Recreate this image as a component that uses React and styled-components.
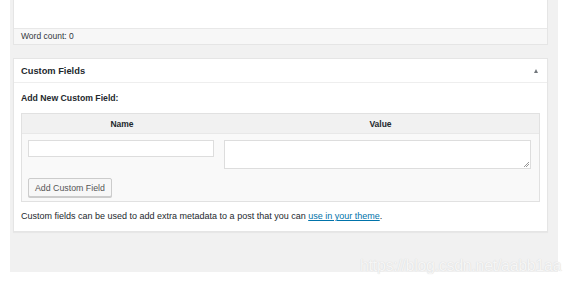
import React from 'react'
import styled, { createGlobalStyle } from 'styled-components'

const GlobalStyle = createGlobalStyle`
    body {
        margin: 0;
        background: #fff;
        font-family: "Liberation Sans", Arial, sans-serif;
        color: #23282d;
    }
`

const Page = styled.div`
    position: relative;
    width: 578px;
    height: 285px;
`

const Wrap = styled.div`
    margin-left: 10px;
    width: 535px;
    height: 272px;
    padding: 0 10px 0 3px;
    background: #f1f1f1;
    display: flex;
    flex-direction: column;
    gap: 13px;
`

const Editor = styled.div`
    background: #fff;
    border: 1px solid #e5e5e5;
    border-top: none;
    height: 44px;
    display: flex;
    flex-direction: column;
    justify-content: flex-end;
`

const WordCount = styled.div`
    height: 15px;
    border-top: 1px solid #e8e8e8;
    background: #f7f7f7;
    font-size: 8.5px;
    line-height: 15px;
    padding-left: 7px;
    color: #32373c;
`

const Box = styled.div`
    background: #fff;
    border: 1px solid #e5e5e5;
    box-shadow: 0 1px 1px rgba(0, 0, 0, 0.04);
`

const BoxHeader = styled.div`
    height: 23px;
    border-bottom: 1px solid #eee;
    display: flex;
    align-items: center;
    justify-content: space-between;
    padding: 0 9px 0 7px;

    h2 {
        margin: 0;
        font-size: 9.3px;
        font-weight: bold;
    }
`

const Toggle = styled.span`
    width: 0;
    height: 0;
    border-left: 2.5px solid transparent;
    border-right: 2.5px solid transparent;
    border-bottom: 4px solid #72777c;
`

const BoxBody = styled.div`
    padding: 10px 7px 0;

    p {
        margin: 0;
        font-size: 9px;
    }
`

const Subtitle = styled.p`
    && {
        font-weight: bold;
        font-size: 8.7px;
        margin-bottom: 10px;
    }
`

const Table = styled.div`
    border: 1px solid #e1e1e1;
    background: #f9f9f9;
    display: grid;
    grid-template-columns: 200px 1fr;
`

const HeadCell = styled.div`
    height: 19px;
    background: #f1f1f1;
    border-bottom: 1px solid #e8e8e8;
    font-size: 8.5px;
    font-weight: bold;
    display: flex;
    align-items: center;
    justify-content: center;
`

const Cell = styled.div`
    padding: ${p => p.$pad || '6px 7px'};
`

const Input = styled.div`
    height: 15px;
    background: #fff;
    border: 1px solid #ddd;
`

const TextArea = styled.div`
    position: relative;
    height: 27px;
    background: #fff;
    border: 1px solid #ddd;

    &::after {
        content: '';
        position: absolute;
        right: 1px;
        bottom: 1px;
        width: 5px;
        height: 5px;
        background: linear-gradient(135deg, transparent 45%, #999 45%, #999 55%, transparent 55%, transparent 70%, #999 70%, #999 80%, transparent 80%);
    }
`

const ButtonRow = styled.div`
    grid-column: 1 / 3;
    display: flex;
    padding: 3px 6px 4px;
`

const Button = styled.button`
    height: 19px;
    padding: 0 6px;
    background: #f7f7f7;
    border: 1px solid #ccc;
    border-radius: 2px;
    box-shadow: 0 1px 0 #ccc;
    font-family: inherit;
    font-size: 8.8px;
    color: #555;
`

const Help = styled.p`
    && {
        padding: 9px 0 10px;
    }

    a {
        color: #0073aa;
    }
`

const Watermark = styled.div`
    position: absolute;
    left: 360px;
    top: 257px;
    font-size: 16px;
    color: #f6f6f6;
    text-shadow: 0 0 1px #d0d0d0;
    letter-spacing: -0.3px;
`

const App = () => {
    return (
        <Page>
            <GlobalStyle />
            <Wrap>
                <Editor>
                    <WordCount>Word count: 0</WordCount>
                </Editor>
                <Box>
                    <BoxHeader>
                        <h2>Custom Fields</h2>
                        <Toggle />
                    </BoxHeader>
                    <BoxBody>
                        <Subtitle>Add New Custom Field:</Subtitle>
                        <Table>
                            <HeadCell>Name</HeadCell>
                            <HeadCell>Value</HeadCell>
                            <Cell $pad="6px 8px 6px 6px"><Input /></Cell>
                            <Cell $pad="6px 8px 6px 2px"><TextArea /></Cell>
                            <ButtonRow>
                                <Button>Add Custom Field</Button>
                            </ButtonRow>
                        </Table>
                        <Help>
                            Custom fields can be used to add extra metadata to a post that you can <a href="#">use in your theme</a>.
                        </Help>
                    </BoxBody>
                </Box>
            </Wrap>
            <Watermark>https://blog.csdn.net/aabb1aa</Watermark>
        </Page>
    )
}

export default App
